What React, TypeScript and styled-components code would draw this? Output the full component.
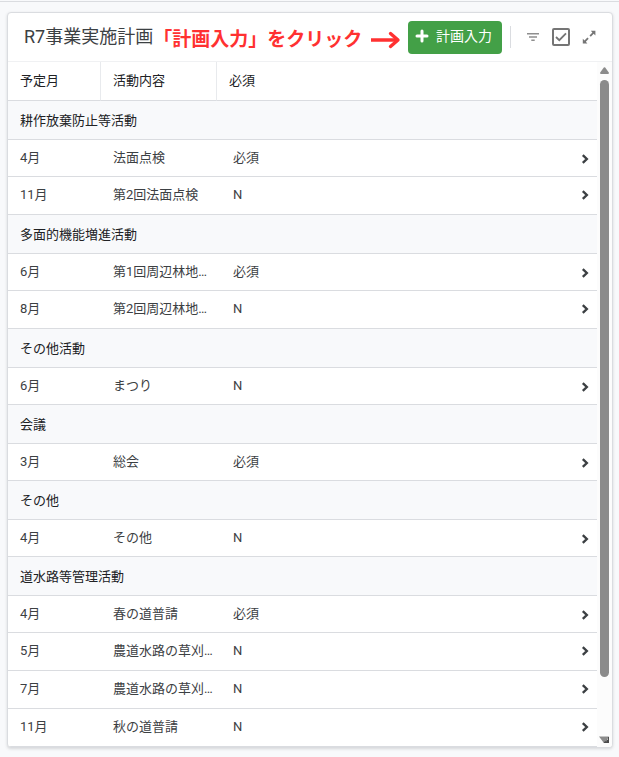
import React from "react";
import styled, { createGlobalStyle } from "styled-components";

const fonts = `Roboto, "Noto Sans CJK JP", sans-serif`;
const line = "#dadce0";

const GlobalStyle = createGlobalStyle`
  * { box-sizing: border-box; }
  body {
    margin: 0;
    background: #f8f9fb;
    color: #3c4043;
    font-family: ${fonts};
    font-size: 13px;
  }
  button { font: inherit; border: 0; padding: 0; background: none; cursor: pointer; }
`;

const Page = styled.main`
  margin-top: 1px;
  border-top: 1px solid ${line};
  padding: 10px 6px 10px 7px;
`;

const Card = styled.section`
  background: #fff;
  border: 1px solid ${line};
  border-radius: 4px;
  box-shadow: 0 1px 3px rgba(60, 64, 67, 0.18);
  overflow: hidden;
`;

const CardHeader = styled.header`
  display: flex;
  align-items: center;
  height: 49px;
  padding: 0 9px 0 16px;
  border-bottom: 1px solid #f0f1f3;
  white-space: nowrap;
`;

const Title = styled.h1`
  margin: 0;
  font-size: 18px;
  line-height: 24px;
  font-weight: 400;
`;

const Note = styled.p`
  display: flex;
  align-items: center;
  gap: 8px;
  margin: 0;
  padding-top: 5px;
  color: #ff3131;
  font-size: 19px;
  line-height: 24px;
  font-weight: 700;
`;

const Actions = styled.div`
  display: flex;
  align-items: center;
  margin-left: auto;
`;

const AddButton = styled.button`
  display: flex;
  align-items: center;
  gap: 7px;
  height: 33px;
  padding: 0 10px 2px 7px;
  border-radius: 4px;
  background: #43a047;
  color: #fff;
  font-size: 14px;
  line-height: 20px;
`;

const Divider = styled.span`
  width: 1px;
  height: 22px;
  margin: 0 8px;
  background: ${line};
`;

const IconSlot = styled.button`
  display: grid;
  place-items: center;
  width: 28px;
  height: 28px;
  color: #757575;
`;

const CheckSlot = styled.label`
  display: grid;
  place-items: center;
  width: 28px;
  height: 28px;
  color: #757575;

  > * { grid-area: 1 / 1; }
  > svg { pointer-events: none; }
`;

const CheckInput = styled.input`
  appearance: none;
  width: 18px;
  height: 18px;
  margin: 0;
  border: 2px solid #757575;
  border-radius: 2px;
  background: #fff;
`;

const CardBody = styled.div`
  display: grid;
  grid-template-columns: minmax(0, 1fr) 15px;
`;

const Table = styled.table`
  width: 100%;
  table-layout: fixed;
  border-collapse: separate;
  border-spacing: 0;
  line-height: 20px;
  text-align: left;
`;

const Col = styled.col<{ $width?: number }>`
  ${(p) => p.$width && `width: ${p.$width}px;`}
`;

const HeadCell = styled.th<{ $divided?: boolean }>`
  height: 39px;
  padding: 0 12px;
  border-bottom: 1px solid ${line};
  ${(p) => p.$divided && "border-right: 1px solid #e8eaed;"}
  color: #202124;
  font-weight: 400;
`;

const GroupCell = styled.th`
  height: 39px;
  padding: 2px 12px 0;
  border-bottom: 1px solid ${line};
  background: #f8f9fb;
  color: #202124;
  font-weight: 400;
`;

const Row = styled.tr<{ $first: boolean }>`
  height: ${(p) => (p.$first ? 37 : 38)}px;

  > td { padding-bottom: ${(p) => (p.$first ? 0 : 2)}px; }
`;

const Cell = styled.td<{ $kind?: "name" | "flag" | "open" }>`
  padding: 0 ${(p) => (p.$kind === "name" ? 3 : 8)}px 0
    ${(p) => (p.$kind === "flag" ? 16 : p.$kind === "open" ? 0 : 12)}px;
  border-bottom: 1px solid ${line};
  overflow: hidden;
  white-space: nowrap;
  text-overflow: ellipsis;
`;

const OpenButton = styled.button`
  display: block;
  margin-left: auto;
  padding-top: 1px;
  color: #3c4043;

  > svg { display: block; }
`;

const Scrollbar = styled.div`
  display: flex;
  flex-direction: column;
  align-items: center;
  padding: 5px 0 3px;
  background: #fcfcfc;
  color: #8b8b8b;

  > svg { flex: none; }
`;

const Track = styled.div`
  flex: 1;
  width: 9px;
  margin: 6px 0 0;
`;

const Thumb = styled.div`
  height: 91%;
  border-radius: 5px;
  background: #8b8b8b;
`;

type Item = [month: string, name: string, flag: string];

const groups: { title: string; items: Item[] }[] = [
  { title: "耕作放棄防止等活動", items: [["4月", "法面点検", "必須"], ["11月", "第2回法面点検", "N"]] },
  { title: "多面的機能増進活動", items: [["6月", "第1回周辺林地…", "必須"], ["8月", "第2回周辺林地…", "N"]] },
  { title: "その他活動", items: [["6月", "まつり", "N"]] },
  { title: "会議", items: [["3月", "総会", "必須"]] },
  { title: "その他", items: [["4月", "その他", "N"]] },
  {
    title: "道水路等管理活動",
    items: [
      ["4月", "春の道普請", "必須"],
      ["5月", "農道水路の草刈…", "N"],
      ["7月", "農道水路の草刈…", "N"],
      ["11月", "秋の道普請", "N"],
    ],
  },
];

export default function App() {
  return (
    <>
      <GlobalStyle />
      <Page>
        <Card>
          <CardHeader>
            <Title>R7事業実施計画</Title>
            <Note>
              「計画入力」をクリック
              <svg width="31" height="18" viewBox="0 0 31 18" fill="none" stroke="currentColor" strokeWidth="3.4" strokeLinejoin="round" aria-hidden="true">
                <path d="M1 9H28" />
                <path d="M20.5 2.5L28 9L20.5 15.5" strokeLinecap="round" />
              </svg>
            </Note>
            <Actions>
              <AddButton type="button">
                <svg width="14" height="14" viewBox="0 0 14 14" fill="none" stroke="currentColor" strokeWidth="3" strokeLinecap="round" aria-hidden="true">
                  <path d="M7 2V12M2 7H12" />
                </svg>
                計画入力
              </AddButton>
              <Divider />
              <IconSlot type="button" aria-label="フィルタ">
                <svg width="12" height="8" viewBox="0 0 12 8" fill="#8e8e8e" aria-hidden="true">
                  <path d="M0 0H12V1.6H0ZM2 3.2H10V4.8H2ZM4.3 6.4H7.7V8H4.3Z" />
                </svg>
              </IconSlot>
              <CheckSlot>
                <CheckInput type="checkbox" defaultChecked aria-label="選択" />
                <svg width="12" height="10" viewBox="0 0 12 10" fill="none" stroke="currentColor" strokeWidth="1.8" aria-hidden="true">
                  <path d="M1 5L4.3 8.2L11 1.3" />
                </svg>
              </CheckSlot>
              <IconSlot type="button" aria-label="展開">
                <svg width="14" height="14" viewBox="0 0 14 14" fill="currentColor" aria-hidden="true">
                  <path d="M8.8 0.8H13.4V5.4L11.7 3.8L8.8 6.7L7.5 5.4L10.4 2.5ZM5.4 7.5L6.7 8.8L3.8 11.7L5.4 13.4H0.8V8.8L2.5 10.4Z" />
                </svg>
              </IconSlot>
            </Actions>
          </CardHeader>
          <CardBody>
            <Table>
              <colgroup>
                <Col $width={93} />
                <Col $width={116} />
                <Col />
                <Col $width={40} />
              </colgroup>
              <thead>
                <tr>
                  <HeadCell scope="col" $divided>予定月</HeadCell>
                  <HeadCell scope="col" $divided>活動内容</HeadCell>
                  <HeadCell scope="col" colSpan={2}>必須</HeadCell>
                </tr>
              </thead>
              {groups.map((group) => (
                <tbody key={group.title}>
                  <tr>
                    <GroupCell scope="rowgroup" colSpan={4}>{group.title}</GroupCell>
                  </tr>
                  {group.items.map(([month, name, flag], i) => (
                    <Row key={i} $first={i === 0}>
                      <Cell>{month}</Cell>
                      <Cell $kind="name">{name}</Cell>
                      <Cell $kind="flag">{flag}</Cell>
                      <Cell $kind="open">
                        <OpenButton type="button" aria-label="詳細">
                          <svg width="8" height="10" viewBox="0 0 8 10" fill="none" stroke="currentColor" strokeWidth="2.4" aria-hidden="true">
                            <path d="M1.8 1.2L5.8 5L1.8 8.8" />
                          </svg>
                        </OpenButton>
                      </Cell>
                    </Row>
                  ))}
                </tbody>
              ))}
            </Table>
            <Scrollbar aria-hidden="true">
              <svg width="9" height="7" viewBox="0 0 9 7" fill="currentColor">
                <path d="M3.8 0.6Q4.5 -0.2 5.2 0.6L8.8 5.6Q9.2 7 8 7H1Q-0.2 7 0.2 5.6Z" />
              </svg>
              <Track>
                <Thumb />
              </Track>
              <svg width="11" height="8" viewBox="0 0 11 8">
                <path d="M0 0.5H10L6.5 6.5Q5.5 7.5 4.5 6.5Z" fill="currentColor" />
                <path d="M10 1V7H4.5L6 5.2H7.5V3.8H9V1Z" fill="#4a4a4a" />
              </svg>
            </Scrollbar>
          </CardBody>
        </Card>
      </Page>
    </>
  );
}
